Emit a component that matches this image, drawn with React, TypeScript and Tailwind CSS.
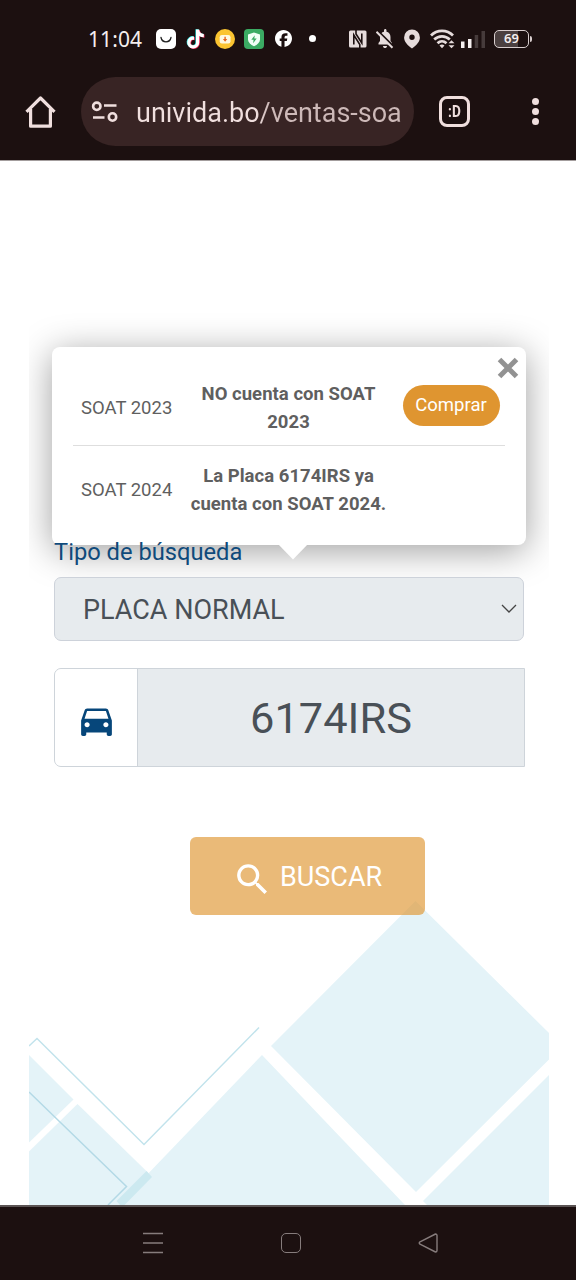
import { FaFacebook } from "react-icons/fa6";
import { MdDirectionsCar, MdSearch } from "react-icons/md";

const TIKTOK =
  "M448,209.91a210.06,210.06,0,0,1-122.77-39.25V349.38A162.55,162.55,0,1,1,185,188.31V278.2a74.62,74.62,0,1,0,52.23,71.18V0l88,0a121.18,121.18,0,0,0,1.86,22.17h0A122.18,122.18,0,0,0,381,102.39a121.43,121.43,0,0,0,67,20.14Z";

function StatusBar() {
  return (
    <div className="flex h-[77px] items-center pl-[88px] text-[#e6dcdc]">
      <span className="w-[68px] pt-px font-['Noto_Sans',sans-serif] text-[21px] leading-none tracking-[0.1px] whitespace-nowrap text-[#f4eeee]">11:04</span>
      <svg className="mr-[10px]" width="20" height="20" viewBox="0 0 20 20">
        <rect width="20" height="20" rx="5" fill="#fff" />
        <path d="M5 8.500c1.200 5.800 8.800 5.800 10 0" fill="none" stroke="#222" strokeWidth="1.300" strokeLinecap="round" />
      </svg>
      <svg className="mr-[10px]" width="19" height="20" viewBox="-22 -15 492 540">
        <path d={TIKTOK} fill="#25e8e4" transform="translate(-16 -10)" />
        <path d={TIKTOK} fill="#f5285a" transform="translate(18 12)" />
        <path d={TIKTOK} fill="#fff" />
      </svg>
      <svg className="mr-[9px]" width="20" height="20" viewBox="0 0 20 20">
        <circle cx="10" cy="10" r="10" fill="#fbc431" />
        <rect x="4.700" y="6" width="10.800" height="8.500" rx="2.200" fill="#fff8e0" />
        <path d="M9.400 7.800h1.400v2.200h1.500l-2.200 2.800-2.200-2.800h1.500z" fill="#e8661c" />
      </svg>
      <svg className="mr-[11px]" width="20" height="20" viewBox="0 0 20 20">
        <rect width="20" height="20" rx="4" fill="#3bab63" />
        <path d="M10 3.500 16 5.500v5c0 3-2.500 5-6 6.800-3.500-1.800-6-3.800-6-6.800v-5z" fill="#f1fff6" />
        <path d="m10.800 6.300-3.500 4.500h2.300l-.5 3.400 3.600-4.600h-2.400z" fill="#3bab63" />
      </svg>
      <FaFacebook className="mr-[17px] size-[17px] text-white" />
      <div className="mr-[33px] size-[7px] rounded-full bg-white" />
      <svg className="mr-[9px]" width="18" height="18" viewBox="0 0 18 18" fill="none">
        <rect y=".5" width="17.500" height="17" rx="1.500" fill="#e6dcdc" />
        <path d="M4.800 14.500V5l6 9.500V18M12.800 3.500V13L7 4V0" stroke="#1c1010" strokeWidth="1.600" />
      </svg>
      <svg className="mr-[10px]" width="18" height="20" viewBox="0 0 18 20">
        <path d="M2.500 15.500V14l1.500-2V8c0-3 1.700-4.800 4-5.300V1.500c0-2 2.500-2 2.500 0v1.200c2.300.5 4 2.300 4 5.300v4l1.500 2v1.500z" fill="#e6dcdc" />
        <path d="M7 17h4c0 2.800-4 2.800-4 0z" fill="#e6dcdc" />
        <path d="M1.500 1.500 18 18" stroke="#1c1010" strokeWidth="2" />
        <path d="m.5 2.800 16 16" stroke="#e6dcdc" strokeWidth="2" />
      </svg>
      <svg className="mr-[10px]" width="16" height="20" viewBox="0 0 16 20">
        <path fillRule="evenodd" d="M8 .5a7.900 7.900 0 0 1 7.900 7.900C15.900 12.500 12.500 16 8 19.500 3.500 16 .1 12.500.1 8.400A7.900 7.900 0 0 1 8 .5zm0 5a2.700 2.700 0 1 0 0 5.400 2.700 2.700 0 0 0 0-5.400z" fill="#e6dcdc" />
      </svg>
      <svg className="mr-[6px]" width="25" height="20" viewBox="0 0 25 20" fill="none">
        <g stroke="#e6dcdc" strokeWidth="2.700">
          <path d="M1 6.500c6-6.200 16-6.200 22 0" />
          <path d="M4.200 10.500c4.500-4.300 11.100-4.300 15.600 0" />
          <path d="M7.500 14.300c2.600-2.500 6.400-2.500 9 0" />
        </g>
        <path d="m9.500 16.500 2.500 2.700 2.500-2.700q-2.500-1.800-5 0zM18.500 14.300l3-3 3 3zM18.500 16.200l3 3 3-3z" fill="#e6dcdc" />
      </svg>
      <svg className="mr-[8px]" width="25" height="18" viewBox="0 0 25 18">
        <path d="M0 11.500h3.500V18H0zM7 9h3.500v9H7z" fill="#f4eeee" />
        <path d="M13.700 5h3.500v13h-3.500zM20.500 1H24v17h-3.500z" fill="#463b3b" />
      </svg>
      <div className="relative flex h-[18px] w-[35px] items-center justify-center rounded-[5px] border-[1.500px] border-[#d8cece] bg-linear-to-r from-[#4b4040] from-70% to-[#1c1010] to-70% font-['Noto_Sans',sans-serif] text-[13px] leading-none font-semibold text-[#f4eeee]">
        69
        <span className="absolute top-[5px] -right-[4px] h-[6px] w-[2px] rounded-r-sm bg-[#d8cece]" />
      </div>
    </div>
  );
}

function BrowserBar() {
  return (
    <div className="flex h-[69px] items-center pl-[25px]">
      <svg width="31" height="32" viewBox="0 0 31 32" fill="none" stroke="#f0dfde" strokeWidth="3.200" strokeLinejoin="round">
        <path d="M1.500 15.800 15.500 2l14 13.800M5.600 13v17.200h19.800V13" />
      </svg>
      <div className="ml-[25px] flex h-[69px] w-[333px] items-center rounded-full bg-[#382424] pl-[10px]">
        <svg width="28" height="24" viewBox="0 0 28 24" fill="none" stroke="#f0dfde" strokeWidth="2.600">
          <circle cx="5.800" cy="6.300" r="3.700" />
          <path d="M13 5.500h12.500M2 17.500h11.500" />
          <circle cx="21.500" cy="17" r="3.700" />
        </svg>
        <span className="mt-[2px] ml-[17px] w-[266px] overflow-hidden bg-linear-to-r from-[#f0dfde] from-45% to-[#cdb9b8] to-50% bg-clip-text text-[27px] leading-[36px] whitespace-nowrap text-transparent">
          univida.bo/ventas-soa
        </span>
      </div>
      <div className="ml-[25px] flex size-[31px] items-center justify-center rounded-[8px] border-[3px] border-[#f0dfde] text-[16px] leading-none font-bold text-[#f0dfde]">
        <span className="scale-x-[0.85]">:D</span>
      </div>
      <div className="ml-[62px] flex flex-col gap-[3.300px]">
        <span className="size-[7px] rounded-full bg-[#f0dfde]" />
        <span className="size-[7px] rounded-full bg-[#f0dfde]" />
        <span className="size-[7px] rounded-full bg-[#f0dfde]" />
      </div>
    </div>
  );
}

function Backdrop() {
  return (
    <svg className="absolute inset-0" width="520" height="1045" viewBox="29 160 520 1045">
      <g fill="#e4f3f8">
        <path d="M271 1046 415.500 901 549 1033v26.500L416 1192z" />
        <path d="M262 1055 405 1205H118z" />
        <path d="M549 1075v130H427l-4-4z" />
        <path d="m29 1055 44.500 44.500L29 1142.500z" />
        <path d="m77.500 1104 75 73L125 1205H29v-53.500z" />
      </g>
      <path d="m146.500 1171 5.500 6-27.500 28H120l-3.500-4z" fill="#cce9f0" />
      <g fill="none" strokeWidth="1.500">
        <path d="m29 1046 8-7.500 107 106 115-117" stroke="#c2e3ec" />
        <path d="m29 1092 97.500 94.500L108 1205" stroke="#b3d9e6" />
      </g>
    </svg>
  );
}

function Popover() {
  return (
    <div className="relative ml-[23px] h-[198px] w-[473.500px] rounded-[8px] bg-white px-[20.500px] text-[18.500px] text-[#5f5f5f] shadow-[0_6px_36px_rgba(0,0,0,0.38)]">
      <div className="flex h-[99px] border-b-[1.500px] border-[#dedede] pt-[33px]">
        <div className="w-[108px] pt-[14px] pl-[8.500px] leading-[28px] whitespace-nowrap">SOAT 2023</div>
        <div className="w-[216px] text-center leading-[28px] font-bold tracking-[0.030px]">
          NO cuenta con SOAT
          <br />
          2023
        </div>
        <button className="mt-[5px] ml-[6px] h-[41px] w-[97px] rounded-full bg-[#df9530] text-[18.500px] leading-none text-white">Comprar</button>
      </div>
      <div className="flex pt-[16px]">
        <div className="w-[108px] pt-[14px] pl-[8.500px] leading-[28px] whitespace-nowrap">SOAT 2024</div>
        <div className="w-[216px] text-center leading-[28px] font-bold tracking-[0.030px]">
          La Placa 6174IRS ya
          <br />
          cuenta con SOAT 2024.
        </div>
      </div>
      <svg className="absolute top-[10px] right-[7px]" width="22" height="22" viewBox="0 0 22 22" stroke="#929292" strokeWidth="5">
        <path d="m2.500 2.500 17 17m0-17-17 17" />
      </svg>
      <svg className="absolute top-[197px] left-[226px]" width="30" height="16" viewBox="0 0 30 16">
        <path d="M0 0h30L15 15.500z" fill="#fff" />
      </svg>
    </div>
  );
}

export default function App() {
  return (
    <div className="flex h-[1280px] w-[576px] flex-col bg-white font-[Roboto,sans-serif]">
      <header className="h-[160px] bg-[#1c1010] shadow-[0_1px_0_#a39d9d]">
        <StatusBar />
        <BrowserBar />
      </header>
      <main className="relative ml-[29px] h-[1045px] w-[520px] overflow-hidden pt-[187px]">
        <Backdrop />
        <Popover />
        <div className="relative ml-[25px] w-[471px]">
          <div className="h-[32px] text-[23.700px] leading-[14px] text-[#0f4a7b]">Tipo de búsqueda</div>
          <div className="flex h-[64px] w-[470px] items-center justify-between rounded-[7px] border-[1.500px] border-[#cdd2da] bg-[#e7ebee] pr-[6px] pl-[28px] text-[27px] text-[#495057]">
            <span className="pt-[3px]">PLACA NORMAL</span>
            <svg width="16" height="10" viewBox="0 0 16 10" fill="none" stroke="#444" strokeWidth="1.300">
              <path d="m1 1 7 7 7-7" />
            </svg>
          </div>
          <div className="mt-[27px] flex h-[99px] rounded-l-[7px] border-[1.500px] border-[#ced4da] bg-[#e7ebee]">
            <div className="flex w-[83px] items-center justify-center rounded-l-[6px] border-r-[1.500px] border-[#ced4da] bg-white pt-[5px]">
              <MdDirectionsCar className="size-[41px] text-[#06467a]" />
            </div>
            <div className="flex flex-1 items-center justify-center pt-[3px] text-[43.400px] text-[#495057]">6174IRS</div>
          </div>
          <button className="mt-[70px] ml-[136px] flex h-[78px] w-[235px] items-center rounded-[6px] bg-[#df9530]/65 pl-[42px] text-[27px] text-white">
            <MdSearch className="mt-[6px] mr-[7px] size-[41px]" />
            <span className="pt-[3px]">BUSCAR</span>
          </button>
        </div>
      </main>
      <nav className="flex h-[75px] items-center border-t-2 border-[#5b5454] bg-[#1c1010] pb-[1px] pl-[143px]">
        <svg width="20" height="22" viewBox="0 0 20 22" stroke="#867c7c" strokeWidth="1.500">
          <path d="M0 1.500h20M0 11h20M0 20.500h20" />
        </svg>
        <div className="ml-[118px] size-[20px] rounded-[5px] border-[1.500px] border-[#867c7c]" />
        <svg className="ml-[117px]" width="20" height="20" viewBox="0 0 20 20" fill="none" stroke="#867c7c" strokeWidth="1.400" strokeLinejoin="round">
          <path d="M17.500 1 2 8.800q-1.500 1.200 0 2.400L17.500 19q1.500 0 1.500-1.500v-15Q19 1 17.500 1z" />
        </svg>
      </nav>
    </div>
  );
}
